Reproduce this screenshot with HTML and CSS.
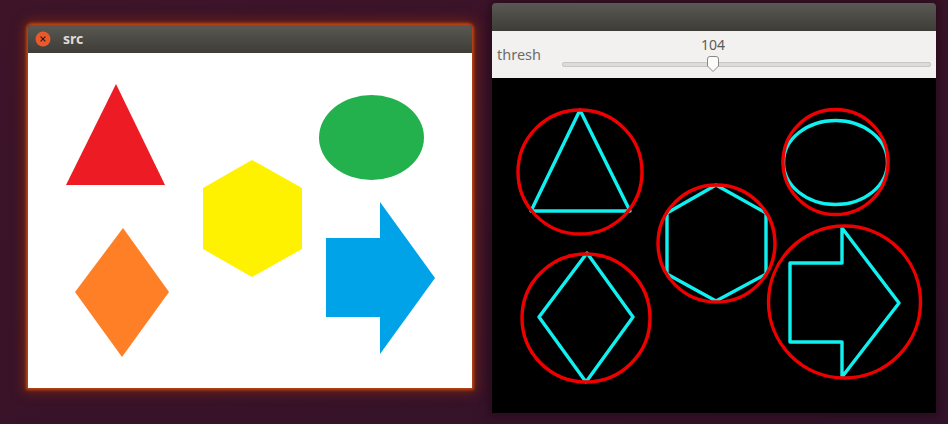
FILE: index.html
```html
<!DOCTYPE html>
<html>
<head>
<meta charset="utf-8">
<link rel="stylesheet" href="styles.css">
</head>
<body>
<div class="desktop">
  <div class="window win-src">
    <div class="titlebar">
      <span class="close"><svg width="16" height="16" viewBox="0 0 16 16"><circle cx="8" cy="8" r="7.5" fill="#e9592c"/><path d="M5.6 5.6 L10.4 10.4 M10.4 5.6 L5.6 10.4" stroke="#3a1a10" stroke-width="1.2"/></svg></span>
      <span class="title">src</span>
    </div>
    <div class="canvas white">
      <svg width="444" height="335" viewBox="0 0 444 335">
        <polygon points="88,31 38,132 137,132" fill="#ed1c24"/>
        <ellipse cx="343.5" cy="84.5" rx="52.5" ry="42.5" fill="#22b14c"/>
        <polygon points="224,107 274,135 274,196 224,224 175,196 175,135" fill="#fff200"/>
        <polygon points="95,175 141,239 94,304 47,239" fill="#ff7f27"/>
        <polygon points="298,185 352,185 352,149 407,225 352,301 352,264 298,264" fill="#00a2e8"/>
      </svg>
    </div>
  </div>

  <div class="window win-out">
    <div class="titlebar"></div>
    <div class="toolbar">
      <span class="label">thresh</span>
      <div class="slider">
        <span class="value">104</span>
        <div class="track"></div>
        <svg class="thumb" width="14" height="18" viewBox="0 0 14 18"><path d="M1.5 4 Q1.5 1.5 4 1.5 L10 1.5 Q12.5 1.5 12.5 4 L12.5 11 L7 16.5 L1.5 11 Z" fill="#fbfbfa" stroke="#8a8a86" stroke-width="1"/></svg>
      </div>
    </div>
    <div class="canvas black">
      <svg width="444" height="335" viewBox="0 0 444 335" fill="none" stroke-linejoin="round">
        <g stroke="#11f0f0" stroke-width="3.4">
          <polygon points="88,32 39,133 138,133"/>
          <ellipse cx="343.5" cy="84.5" rx="52" ry="42"/>
          <polygon points="224,107 274,135 274,196 224,223 175,196 175,135"/>
          <polygon points="95,175 141,239 94,304 47,239"/>
          <polygon points="298,185 350,185 350,150 407,225 350,299 350,264 298,264"/>
        </g>
        <g stroke="#ee0000" stroke-width="3.4">
          <circle cx="88" cy="94" r="62"/>
          <circle cx="343.5" cy="84" r="52.5"/>
          <circle cx="224.5" cy="165.5" r="58.5"/>
          <circle cx="94" cy="240" r="64"/>
          <circle cx="352.5" cy="224" r="76"/>
        </g>
      </svg>
    </div>
  </div>
</div>
</body>
</html>
```

FILE: styles.css
```css
html, body {
  margin: 0;
  padding: 0;
}
body {
  width: 948px;
  height: 424px;
  overflow: hidden;
  font-family: "Noto Sans", "DejaVu Sans", sans-serif;
}
.desktop {
  position: relative;
  width: 948px;
  height: 424px;
  background: linear-gradient(160deg, #3d1428 0%, #3a1328 45%, #33122a 100%);
}
.window {
  position: absolute;
  width: 444px;
  display: flex;
  flex-direction: column;
}
.win-src {
  left: 28px;
  top: 25px;
  box-shadow: 0 0 3px 2px rgba(200, 75, 20, 0.9), 0 0 12px 5px rgba(130, 40, 12, 0.65);
  border-radius: 4px 4px 0 0;
}
.win-out {
  left: 492px;
  top: 3px;
  box-shadow: 0 0 8px 3px rgba(20, 5, 10, 0.45);
  border-radius: 5px 5px 0 0;
}
.titlebar {
  height: 28px;
  background: linear-gradient(#5a5852, #3e3c37);
  border-radius: 4px 4px 0 0;
  display: flex;
  align-items: center;
  padding-left: 7px;
  gap: 12px;
}
.close {
  display: flex;
  width: 16px;
  height: 16px;
}
.title {
  color: #dfdbd2;
  font-weight: bold;
  font-size: 14px;
  line-height: 1;
  padding-bottom: 1px;
}
.canvas {
  height: 335px;
  display: flex;
}
.canvas svg {
  display: block;
}
.white { background: #ffffff; }
.black { background: #000000; }
.toolbar {
  height: 47px;
  background: #f2f1f0;
  display: flex;
  align-items: stretch;
}
.label {
  color: #6e6d6a;
  font-size: 14.5px;
  width: 70px;
  padding-left: 5px;
  padding-top: 13px;
  box-sizing: border-box;
}
.slider {
  position: relative;
  flex: 1;
}
.value {
  position: absolute;
  left: 139px;
  top: 4px;
  font-size: 14px;
  color: #5c5b58;
}
.track {
  position: absolute;
  left: 0;
  right: 5px;
  top: 31px;
  height: 3px;
  background: #dcdbd9;
  border: 1px solid #c8c7c4;
  border-radius: 2px;
}
.thumb {
  position: absolute;
  left: 144px;
  top: 24px;
}
```
